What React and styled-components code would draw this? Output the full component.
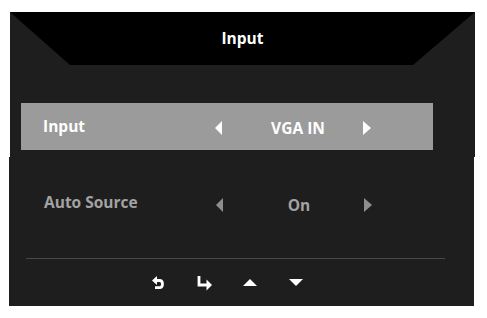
import styled, { createGlobalStyle } from "styled-components";

const GlobalStyle = createGlobalStyle`
  html, body {
    margin: 0;
    padding: 0;
    background: #fff;
  }
  body {
    font-family: "Open Sans", "Liberation Sans", sans-serif;
  }
`;

const Screen = styled.div`
  width: 487px;
  height: 318px;
  padding-top: 12px;
  box-sizing: border-box;
`;

const TopPanel = styled.div`
  margin-left: 10px;
  width: 465px;
  height: 145px;
  background: #1f1e1f;
  display: flex;
  flex-direction: column;
`;

const Header = styled.div`
  height: 53px;
  background: #000;
  clip-path: polygon(0 0, 100% 0, calc(100% - 62px) 100%, 60px 100%);
  display: flex;
  align-items: center;
  justify-content: center;
  color: #fff;
  font-weight: 700;
  font-size: 15.5px;
  padding-bottom: 1px;
  box-sizing: border-box;
`;

const BottomPanel = styled.div`
  margin-left: 9px;
  width: 465px;
  height: 149px;
  background: #1f1e1f;
  display: flex;
  flex-direction: column;
`;

const Row = styled.div`
  display: grid;
  grid-template-columns: ${(p) => p.$first}px 8px 140px 9px;
  align-items: center;
  height: 47px;
  width: 412px;
  box-sizing: border-box;
  padding-left: ${(p) => p.$pad}px;
  margin-left: ${(p) => p.$left}px;
  margin-top: ${(p) => p.$top}px;
  background: ${(p) => (p.$active ? "#9b9b9b" : "transparent")};
  color: ${(p) => (p.$active ? "#fff" : "#a3a3a3")};
  font-weight: 700;
  font-size: 15.5px;
`;

const Label = styled.div`
  margin-top: ${(p) => p.$shift || 0}px;
  white-space: nowrap;
`;

const Value = styled.div`
  text-align: center;
  padding-left: 10px;
  margin-top: 3px;
`;

const Arrow = styled.div`
  width: 0;
  height: 0;
  margin-top: 2px;
  border-top: 7px solid transparent;
  border-bottom: 7px solid transparent;
  ${(p) =>
    p.$dir === "left"
      ? `border-right: 7px solid ${p.$color};`
      : `border-left: 8px solid ${p.$color};`}
`;

const Divider = styled.div`
  margin: 31px 0 0 17px;
  width: 419px;
  height: 1px;
  background: #484848;
`;

const Keys = styled.div`
  display: flex;
  align-items: center;
  margin: 14px 0 0 126px;
`;

const Key = styled.div`
  width: 46px;
  display: flex;
  justify-content: center;
  align-items: center;
  height: 20px;
`;

const BackIcon = () => (
  <svg width="12" height="14" viewBox="0 0 12 14">
    <polygon points="0,4.5 5,0 5,9" fill="#fff" />
    <path
      d="M4.5 4.5 H7.5 Q10.5 4.5 10.5 8 Q10.5 11.6 7.5 11.6 H3"
      fill="none"
      stroke="#fff"
      strokeWidth="2.8"
    />
  </svg>
);

const EnterIcon = () => (
  <svg width="15" height="15" viewBox="0 0 15 15">
    <path d="M2 0 V9 H10" fill="none" stroke="#fff" strokeWidth="2.8" />
    <polygon points="9.5,3.5 15,9 9.5,14.5" fill="#fff" />
  </svg>
);

const Tri = ({ up }) => (
  <svg width="14" height="8" viewBox="0 0 14 8">
    <polygon points={up ? "0,7 7,0 14,7" : "0,0 14,0 7,7"} fill="#fff" />
  </svg>
);

export default function App() {
  return (
    <Screen>
      <GlobalStyle />
      <TopPanel>
        <Header>Input</Header>
        <Row $active $left={11} $top={38} $pad={22} $first={172}>
          <Label $shift={-2}>Input</Label>
          <Arrow $dir="left" $color="#fff" />
          <Value>VGA IN</Value>
          <Arrow $dir="right" $color="#fff" />
        </Row>
      </TopPanel>
      <BottomPanel>
        <Row $left={12} $top={23} $pad={23} $first={172}>
          <Label $shift={-3}>Auto Source</Label>
          <Arrow $dir="left" $color="#8e8e8e" />
          <Value>On</Value>
          <Arrow $dir="right" $color="#8e8e8e" />
        </Row>
        <Divider />
        <Keys>
          <Key>
            <BackIcon />
          </Key>
          <Key>
            <EnterIcon />
          </Key>
          <Key>
            <Tri up />
          </Key>
          <Key>
            <Tri />
          </Key>
        </Keys>
      </BottomPanel>
    </Screen>
  );
}
